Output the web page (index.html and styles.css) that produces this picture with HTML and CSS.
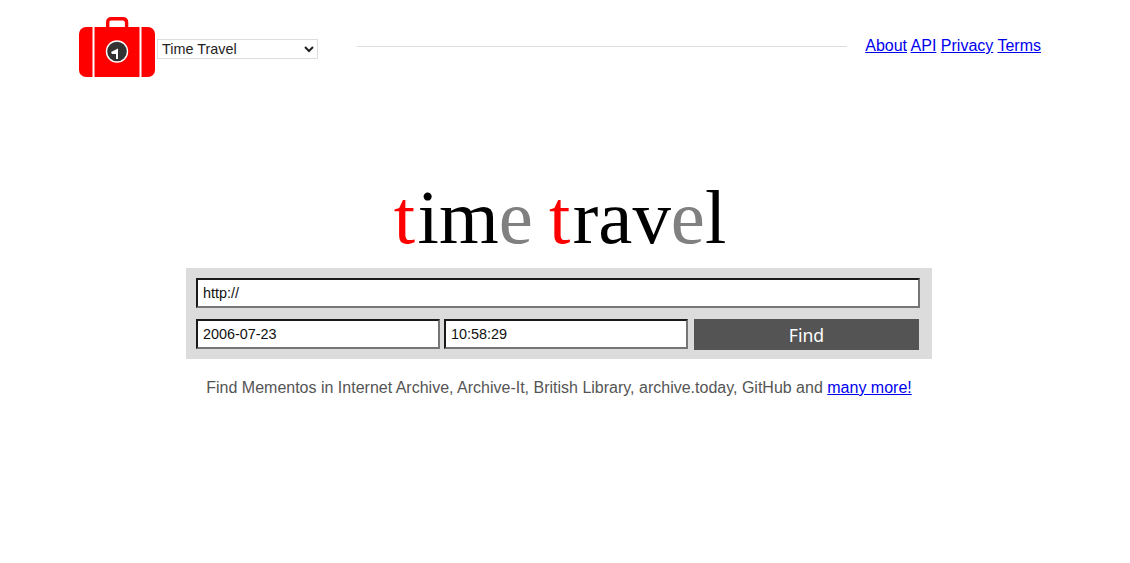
FILE: index.html
```html
<!DOCTYPE html>
<html lang="en">
<head>
  <meta charset="UTF-8">
  <meta name="viewport" content="width=device-width, initial-scale=1.0">
  <title>Time Travel</title>
  <link rel="stylesheet" href="styles.css">
</head>
<body>

<header class="top-bar">
  <div class="brand">
    <svg class="logo" width="76" height="60" viewBox="0 0 76 60" aria-label="Time Travel logo">
      <path d="M28.7 11V5.5Q28.7 1.7 32.5 1.7H43.8Q47.6 1.7 47.6 5.5V11" fill="none" stroke="#f00" stroke-width="3.4"/>
      <rect x="0" y="10" width="76" height="50" rx="7" fill="#f00"/>
      <rect x="13.5" y="10" width="2" height="50" fill="#fff"/>
      <rect x="60.5" y="10" width="2" height="50" fill="#fff"/>
      <circle cx="38" cy="34.5" r="10.5" fill="#333" stroke="#fff" stroke-width="1.4"/>
      <path d="M32 35L39 31.5V42H37V37L33 37Z" fill="#fff"/>
    </svg>
    <select class="service-select">
      <option>Time Travel</option>
    </select>
  </div>
  <div class="rule"></div>
  <nav class="links">
    <a href="#">About</a> <a href="#">API</a> <a href="#">Privacy</a> <a href="#">Terms</a>
  </nav>
</header>

<main class="content">
  <h1 class="title"><span class="red">t</span>im<span class="grey">e</span> <span class="red">t</span>rav<span class="grey">e</span>l</h1>
  <form class="search-box">
    <input class="field" type="text" value="http://">
    <div class="row">
      <input class="field date" type="text" value="2006-07-23">
      <input class="field date" type="text" value="10:58:29">
      <button class="find" type="button">Find</button>
    </div>
  </form>
  <p class="note">Find Mementos in Internet Archive, Archive-It, British Library, archive.today, GitHub and <a href="#">many more!</a></p>
</main>

</body>
</html>
```

FILE: styles.css
```css
body {
  margin: 0;
  background-color: #fff;
  color: #000;
  font-family: "Liberation Sans", Arial, sans-serif;
  font-size: 16px;
}

.top-bar {
  display: flex;
  align-items: center;
  height: 60px;
  padding: 17px 89px 0 79px;
}

.brand {
  display: flex;
  align-items: center;
  gap: 2px;
}

.logo {
  display: block;
}

.service-select {
  width: 161px;
  height: 20px;
  margin-top: 4px;
  padding: 0;
  background-color: #fff;
  border: 1px solid #ddd;
  color: #222;
  font-family: "Liberation Sans", Arial, sans-serif;
  font-size: 14.4px;
}

.rule {
  flex: 1;
  height: 1px;
  margin: 0 18px 2px 39px;
  background-color: #ddd;
}

.links {
  margin-bottom: 2px;
  white-space: nowrap;
}

.content {
  display: flex;
  flex-direction: column;
  align-items: center;
}

.title {
  margin: 97px 10px 0 0;
  height: 94px;
  font-family: "Liberation Serif", "Times New Roman", serif;
  font-size: 76.8px;
  font-weight: normal;
  line-height: 88px;
  word-spacing: -3px;
}

.red {
  color: #f00;
  letter-spacing: 2.5px;
}

.grey {
  color: #808080;
}

.search-box {
  display: flex;
  flex-direction: column;
  gap: 11px;
  box-sizing: border-box;
  width: 746px;
  height: 91px;
  margin-right: 12px;
  padding: 10px 12px 0 10px;
  background-color: #dcdcdc;
}

.field {
  box-sizing: border-box;
  width: 100%;
  height: 30px;
  margin: 0;
  padding: 1px 5px;
  background-color: #fff;
  border: 2px solid;
  border-color: #1a1a1a #767676 #767676 #1a1a1a;
  color: #111;
  font-family: "Liberation Sans", Arial, sans-serif;
  font-size: 14.4px;
}

.row {
  display: flex;
  align-items: flex-start;
  gap: 4px;
}

.date {
  flex: none;
  width: 244px;
}

.find {
  flex: none;
  width: 225px;
  height: 31px;
  margin-left: 2px;
  padding: 0;
  background-color: #545454;
  border: none;
  color: #fff;
  font-family: "Noto Sans", sans-serif;
  font-size: 17.6px;
}

.note {
  margin: 20px 12px 0 0;
  color: #555;
  line-height: 18px;
}
```
